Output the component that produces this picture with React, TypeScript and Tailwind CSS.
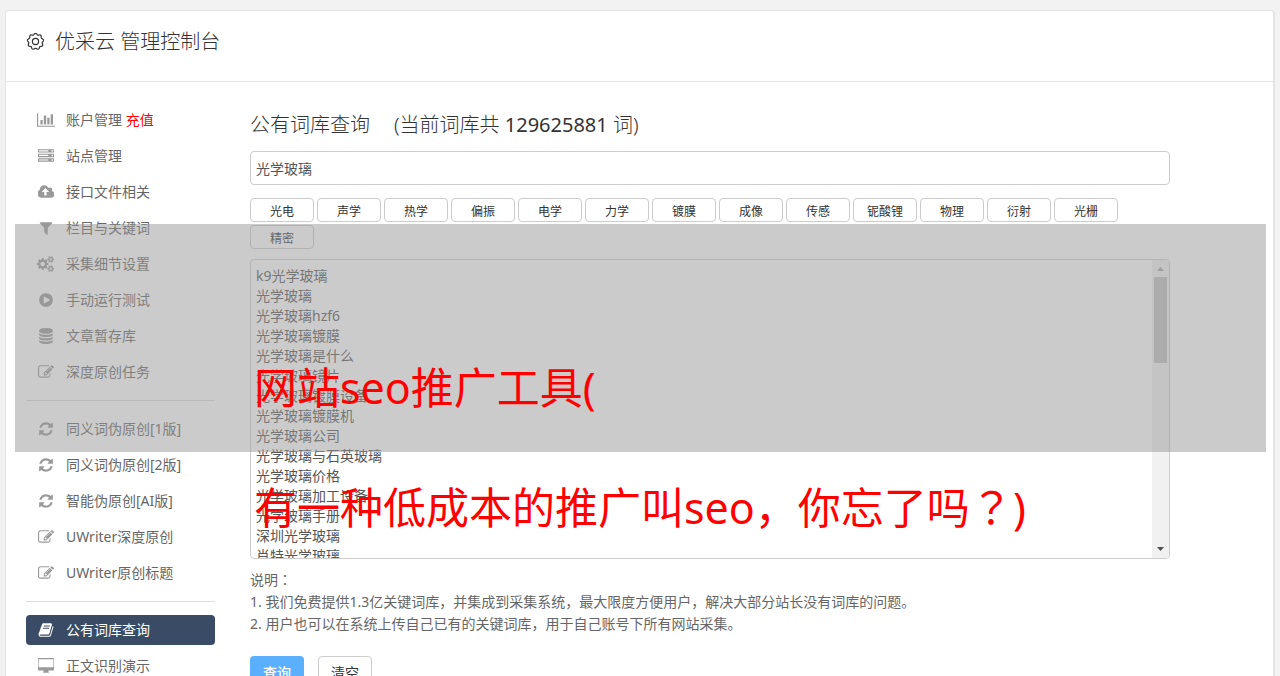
import { useState } from 'react'
import clsx from 'clsx'

interface IconShape {
  width: number
  path: string
}

// Solid icons on a 1792 unit tall grid
const icons: Record<string, IconShape> = {
  chart: {
    width: 2048,
    path: 'M640 896v512h-256v-512h256zm384-512v1024h-256v-1024h256zm1024 1152v128h-2048v-1536h128v1408h1920zm-640-896v768h-256v-768h256zm384-384v1152h-256v-1152h256z',
  },
  server: {
    width: 1792,
    path: 'M128 1408h1024v-128h-1024v128zm0-512h1024v-128h-1024v128zm1568 448q0-40-28-68t-68-28-68 28-28 68 28 68 68 28 68-28 28-68zm-1568-960h1024v-128h-1024v128zm1568 448q0-40-28-68t-68-28-68 28-28 68 28 68 68 28 68-28 28-68zm0-512q0-40-28-68t-68-28-68 28-28 68 28 68 68 28 68-28 28-68zm96 832v384h-1792v-384h1792zm0-512v384h-1792v-384h1792zm0-512v384h-1792v-384h1792z',
  },
  cloud: {
    width: 1856,
    path: 'M1216 864q0-14-9-23l-352-352q-9-9-23-9t-23 9l-351 351q-10 12-10 24 0 14 9 23t23 9h224v352q0 13 9.5 22.5t22.5 9.5h192q13 0 22.5-9.5t9.5-22.5v-352h224q13 0 22.5-9.5t9.5-22.5zm640 288q0 159-112.5 271.5t-271.5 112.5h-1088q-185 0-316.5-131.5t-131.5-316.5q0-130 70-240t188-165q-2-30-2-43 0-212 150-362t362-150q156 0 285.5 87t188.5 231q71-62 166-62 106 0 181 75t75 181q0 76-41 138 130 31 213.5 135.5t83.5 238.5z',
  },
  filter: {
    width: 1792,
    path: 'M1595 295q17 41-14 70l-493 493v742q0 42-39 59-13 5-25 5-27 0-45-19l-256-256q-19-19-19-45v-486l-493-493q-31-29-14-70 17-39 59-39h1280q42 0 59 39z',
  },
  cogs: {
    width: 1920,
    path: 'M896 896q0-106-75-181t-181-75-181 75-75 181 75 181 181 75 181-75 75-181zm768 512q0-52-38-90t-90-38-90 38-38 90q0 53 37.5 90.5t90.5 37.5 90.5-37.5 37.5-90.5zm0-1024q0-52-38-90t-90-38-90 38-38 90q0 53 37.5 90.5t90.5 37.5 90.5-37.5 37.5-90.5zm-384 421v185q0 10-7 19.5t-16 10.5l-155 24q-11 35-32 76 34 48 90 115 7 11 7 20 0 12-7 19-23 30-82.5 89.5t-78.5 59.5q-11 0-21-7l-115-90q-37 19-77 31-11 108-23 155-7 24-30 24h-186q-11 0-20-7.5t-10-17.5l-23-153q-34-10-75-31l-118 89q-7 7-20 7-11 0-21-8-144-133-144-160 0-9 7-19 10-14 41-53t47-61q-23-44-35-82l-152-24q-10-1-17-9.5t-7-19.5v-185q0-10 7-19.5t16-10.5l155-24q11-35 32-76-34-48-90-115-7-11-7-20 0-12 7-20 22-30 82-89t79-59q11 0 21 7l115 90q34-18 77-32 11-108 23-154 7-24 30-24h186q11 0 20 7.5t10 17.5l23 153q34 10 75 31l118-89q8-7 20-7 11 0 21 8 144 133 144 160 0 9-7 19-12 16-42 54t-45 60q23 48 34 82l152 23q10 2 17 10.5t7 19.5zm640 533v140q0 16-149 31-12 27-30 52 51 113 51 138 0 4-4 7-122 71-124 71-8 0-46-47t-52-68q-20 2-30 2t-30-2q-14 21-52 68t-46 47q-2 0-124-71-4-3-4-7 0-25 51-138-18-25-30-52-149-15-149-31v-140q0-16 149-31 13-29 30-52-51-113-51-138 0-4 4-7 4-2 35-20t59-34 30-16q8 0 46 46.5t52 67.5q20-2 30-2t30 2q51-71 92-112l6-2q4 0 124 70 4 3 4 7 0 25-51 138 17 23 30 52 149 15 149 31zm0-1024v140q0 16-149 31-12 27-30 52 51 113 51 138 0 4-4 7-122 71-124 71-8 0-46-47t-52-68q-20 2-30 2t-30-2q-14 21-52 68t-46 47q-2 0-124-71-4-3-4-7 0-25 51-138-18-25-30-52-149-15-149-31v-140q0-16 149-31 13-29 30-52-51-113-51-138 0-4 4-7 4-2 35-20t59-34 30-16q8 0 46 46.5t52 67.5q20-2 30-2t30 2q51-71 92-112l6-2q4 0 124 70 4 3 4 7 0 25-51 138 17 23 30 52 149 15 149 31z',
  },
  play: {
    width: 1792,
    path: 'M896 128q209 0 385.5 103t279.5 279.5 103 385.5-103 385.5-279.5 279.5-385.5 103-385.5-103-279.5-279.5-103-385.5 103-385.5 279.5-279.5 385.5-103zm384 823q32-18 32-55t-32-55l-544-320q-31-19-64-1-32 19-32 56v640q0 37 32 56 16 8 32 8 17 0 32-9z',
  },
  database: {
    width: 1792,
    path: 'M896 768q237 0 443-43t325-127v170q0 69-103 128t-280 93.5-385 34.5-385-34.5-280-93.5-103-128v-170q119 84 325 127t443 43zm0 768q237 0 443-43t325-127v170q0 69-103 128t-280 93.5-385 34.5-385-34.5-280-93.5-103-128v-170q119 84 325 127t443 43zm0-384q237 0 443-43t325-127v170q0 69-103 128t-280 93.5-385 34.5-385-34.5-280-93.5-103-128v-170q119 84 325 127t443 43zm0-1152q208 0 385 34.5t280 93.5 103 128v128q0 69-103 128t-280 93.5-385 34.5-385-34.5-280-93.5-103-128v-128q0-69 103-128t280-93.5 385-34.5z',
  },
  edit: {
    width: 1792,
    path: 'M888 1184l116-116-152-152-116 116v56h96v96h56zm440-720q-16-16-33 1l-350 350q-17 17-1 33t33-1l350-350q17-17 1-33zm80 594v190q0 119-84.5 203.5t-203.5 84.5h-832q-119 0-203.5-84.5t-84.5-203.5v-832q0-119 84.5-203.5t203.5-84.5h832q63 0 117 25 15 7 18 23 3 17-9 29l-49 49q-14 14-32 8-23-6-45-6h-832q-66 0-113 47t-47 113v832q0 66 47 113t113 47h832q66 0 113-47t47-113v-126q0-13 9-22l64-64q15-15 35-7t20 29zm-96-738l288 288-672 672h-288v-288zm444 132l-92 92-288-288 92-92q28-28 68-28t68 28l152 152q28 28 28 68t-28 68z',
  },
  refresh: {
    width: 1792,
    path: 'M1639 1056q0 5-1 7-64 268-268 434.5t-478 166.5q-146 0-282.5-55t-243.5-157l-129 129q-19 19-45 19t-45-19-19-45v-448q0-26 19-45t45-19h448q26 0 45 19t19 45-19 45l-137 137q71 66 161 102t187 36q134 0 250-65t186-179q11-17 53-117 8-23 30-23h192q13 0 22.5 9.5t9.5 22.5zm25-800v448q0 26-19 45t-45 19h-448q-26 0-45-19t-19-45 19-45l138-138q-148-137-349-137-134 0-250 65t-186 179q-11 17-53 117-8 23-30 23h-199q-13 0-22.5-9.5t-9.5-22.5v-7q65-268 270-434.5t480-166.5q146 0 284 55.5t245 156.5l130-129q19-19 45-19t45 19 19 45z',
  },
  book: {
    width: 1792,
    path: 'M1703 478q40 57 18 129l-275 906q-19 64-76.5 107.5t-122.5 43.5h-923q-77 0-148.5-53.5t-99.5-131.5q-24-67-2-127 0-4 3-27t4-37q1-8-3-21.5t-3-19.5q2-11 8-21t16.5-23.5 16.5-23.5q23-38 45-91.5t30-91.5q3-10 .5-30t-.5-28q3-11 17-28t17-23q21-36 42-92t25-90q1-9-2.5-32t.5-28q4-13 22-30.5t22-22.5q19-26 42.5-84.5t27.5-96.5q1-8-3-25.5t-2-26.5q2-8 9-18t18-23 17-21q8-12 16.5-30.5t15-35 16-36 19.5-32 26.5-23.5 36-11.5 47.5 5.5l-1 3q38-9 51-9h761q74 0 114 56t18 130l-274 906q-36 119-71.5 153.5t-128.5 34.5h-869q-27 0-38 15-11 16-1 43 24 70 144 70h923q29 0 56-15.5t35-41.5l300-987q7-22 5-57 38 15 59 43zm-1064 2q-4 13 2 22.5t20 9.5h608q13 0 25.5-9.5t16.5-22.5l21-64q4-13-2-22.5t-20-9.5h-608q-13 0-25.5 9.5t-16.5 22.5zm-83 256q-4 13 2 22.5t20 9.5h608q13 0 25.5-9.5t16.5-22.5l21-64q4-13-2-22.5t-20-9.5h-608q-13 0-25.5 9.5t-16.5 22.5z',
  },
  desktop: {
    width: 1856,
    path: 'M1728 992v-832q0-13-9.5-22.5t-22.5-9.5h-1600q-13 0-22.5 9.5t-9.5 22.5v832q0 13 9.5 22.5t22.5 9.5h1600q13 0 22.5-9.5t9.5-22.5zm128-832v1088q0 66-47 113t-113 47h-544q0 37 16 77.5t32 71 16 43.5q0 26-19 45t-45 19h-512q-26 0-45-19t-19-45q0-14 16-44t32-70 16-78h-544q-66 0-113-47t-47-113v-1088q0-66 47-113t113-47h1600q66 0 113 47t47 113z',
  },
}

const menuGroups = [
  [
    { icon: 'chart', label: '账户管理', extra: '充值' },
    { icon: 'server', label: '站点管理' },
    { icon: 'cloud', label: '接口文件相关' },
    { icon: 'filter', label: '栏目与关键词' },
    { icon: 'cogs', label: '采集细节设置' },
    { icon: 'play', label: '手动运行测试' },
    { icon: 'database', label: '文章暂存库' },
    { icon: 'edit', label: '深度原创任务' },
  ],
  [
    { icon: 'refresh', label: '同义词伪原创[1版]' },
    { icon: 'refresh', label: '同义词伪原创[2版]' },
    { icon: 'refresh', label: '智能伪原创[AI版]' },
    { icon: 'edit', label: 'UWriter深度原创' },
    { icon: 'edit', label: 'UWriter原创标题' },
  ],
  [
    { icon: 'book', label: '公有词库查询', active: true },
    { icon: 'desktop', label: '正文识别演示' },
  ],
] as { icon: string; label: string; extra?: string; active?: boolean }[][]

const tags = ['光电', '声学', '热学', '偏振', '电学', '力学', '镀膜', '成像', '传感', '铌酸锂', '物理', '衍射', '光栅', '精密']

const results = [
  'k9光学玻璃',
  '光学玻璃',
  '光学玻璃hzf6',
  '光学玻璃镀膜',
  '光学玻璃是什么',
  '光学玻璃镜片',
  '光学玻璃镀膜设备',
  '光学玻璃镀膜机',
  '光学玻璃公司',
  '光学玻璃与石英玻璃',
  '光学玻璃价格',
  '光学玻璃加工设备',
  '光学玻璃手册',
  '深圳光学玻璃',
  '肖特光学玻璃',
]

const notes = [
  '说明：',
  '1. 我们免费提供1.3亿关键词库，并集成到采集系统，最大限度方便用户，解决大部分站长没有词库的问题。',
  '2. 用户也可以在系统上传自己已有的关键词库，用于自己账号下所有网站采集。',
]

function Icon({ name }: { name: string }) {
  const { width, path } = icons[name]
  return (
    <svg viewBox={`0 0 ${width} 1792`} className="h-4 w-auto shrink-0" fill="currentColor" aria-hidden="true">
      <path d={path} />
    </svg>
  )
}

// Gear with rounded lobes
function GearIcon() {
  const points = Array.from({ length: 120 }, (_, i) => {
    const angle = (i / 120) * Math.PI * 2
    const radius = 7.5 + 0.7 * Math.cos(angle * 9)
    return `${(9.5 + radius * Math.sin(angle)).toFixed(2)},${(8.5 - radius * Math.cos(angle)).toFixed(2)}`
  })
  return (
    <svg viewBox="0 0 18 18" className="size-[18px] shrink-0" fill="none" stroke="currentColor" strokeWidth="1.2" aria-hidden="true">
      <polygon points={points.join(' ')} strokeLinejoin="round" />
      <circle cx="9.5" cy="8.5" r="3.1" />
    </svg>
  )
}

// Sets full-width marks in the face that centres them in their cell
function Centred({ text }: { text: string }) {
  return text.split(/([：？])/).map((part, index) =>
    index % 2 === 1 ? (
      <span key={index} className="leading-none font-['Noto_Sans_CJK_TC',sans-serif]">{part}</span>
    ) : (
      part
    )
  )
}

function Sidebar() {
  return (
    <nav className="w-[189px] shrink-0 flex flex-col gap-1.5">
      {menuGroups.map((group, index) => (
        <div key={index} className="contents">
          {index > 0 && <hr className="my-[7px] border-[#ddd]" />}
          {group.map(item => (
            <a
              key={item.label}
              href="#"
              className={clsx(
                'flex items-center gap-[11px] h-[30px] pl-[11px] rounded text-sm',
                item.active ? 'bg-[#3a4b66] text-white' : 'text-[#666]'
              )}
            >
              <span className={clsx('w-[18px] flex justify-center', !item.active && 'text-[#999]')}>
                <Icon name={item.icon} />
              </span>
              <span>
                {item.label}
                {item.extra && <span className="text-[#f00]"> {item.extra}</span>}
              </span>
            </a>
          ))}
        </div>
      ))}
    </nav>
  )
}

export default function App() {
  const [keyword, setKeyword] = useState('光学玻璃')
  const [list, setList] = useState(results.join('\n'))

  return (
    <div className="relative min-h-screen overflow-hidden bg-[#f2f2f2] pt-2.5 px-[5px] font-['Noto_Sans','Noto_Sans_CJK_SC',sans-serif]">
      <div className="bg-white border border-r-2 border-[#e4e4e4] rounded">
        <header className="flex items-center gap-[11px] h-[71px] pl-5 pb-2 border-b border-[#e4e4e4] text-[#333]">
          <GearIcon />
          <h1 className="text-xl font-light">优采云 管理控制台</h1>
        </header>

        <div className="flex gap-[35px] pt-[23px] pl-5 pr-[103px] pb-5">
          <Sidebar />

          <main className="flex-1 min-w-0 pt-1.5 text-sm">
            <h2 className="text-xl leading-[28px] text-[#333] font-light">
              公有词库查询
              <span className="ml-6">
                (当前词库共 <span className="font-normal">129625881</span> 词)
              </span>
            </h2>

            <input
              type="text"
              aria-label="关键词"
              value={keyword}
              onChange={e => setKeyword(e.target.value)}
              className="block w-full h-[34px] mt-3 px-[5px] border border-[#ccc] rounded text-[#555]"
            />

            <div className="flex flex-wrap gap-[3px] mt-[13px]">
              {tags.map(tag => (
                <button
                  key={tag}
                  type="button"
                  onClick={() => setKeyword(tag)}
                  className="w-16 h-6 pt-1 border border-[#ccc] rounded bg-white text-xs text-[#333]"
                >
                  {tag}
                </button>
              ))}
            </div>

            <div className="flex h-[300px] mt-2.5 border border-[#ccc] rounded overflow-hidden">
              <textarea
                aria-label="查询结果"
                value={list}
                onChange={e => setList(e.target.value)}
                className="flex-1 min-w-0 px-[5px] pt-1.5 leading-5 text-[#555] resize-none overflow-hidden outline-none"
              />
              <div className="w-[17px] flex flex-col items-center bg-[#f1f1f1]" aria-hidden="true">
                <svg viewBox="0 0 17 17" className="size-[17px]">
                  <path d="M5 11h7L8.500 7z" fill="#a3a3a3" />
                </svg>
                <div className="w-[13px] h-[86px] bg-[#c1c1c1]" />
                <svg viewBox="0 0 17 17" className="size-[17px] mt-auto">
                  <path d="M5 6h7L8.500 10z" fill="#505050" />
                </svg>
              </div>
            </div>

            <div className="mt-2.5 leading-[22px] text-[#666]">
              {notes.map(note => (
                <p key={note}>
                  <Centred text={note} />
                </p>
              ))}
            </div>

            <div className="flex gap-3.5 mt-[21px]">
              <button type="button" className="w-[54px] h-[34px] rounded bg-[#5aafff] text-white font-medium">
                查询
              </button>
              <button
                type="button"
                onClick={() => setList('')}
                className="w-[54px] h-[34px] border border-[#ccc] rounded bg-white text-[#333]"
              >
                清空
              </button>
            </div>
          </main>
        </div>
      </div>

      {/* Caption band over the page */}
      <div className="absolute left-[15px] right-[14px] top-[224px] h-[228px] pl-[239px] pt-[104px] bg-[#979797]/50 pointer-events-none">
        <p className="text-[43px] leading-[120px] text-[#f00]">
          网站seo推广工具(
          <br />
          <Centred text="有一种低成本的推广叫seo，你忘了吗？)" />
        </p>
      </div>
    </div>
  )
}
